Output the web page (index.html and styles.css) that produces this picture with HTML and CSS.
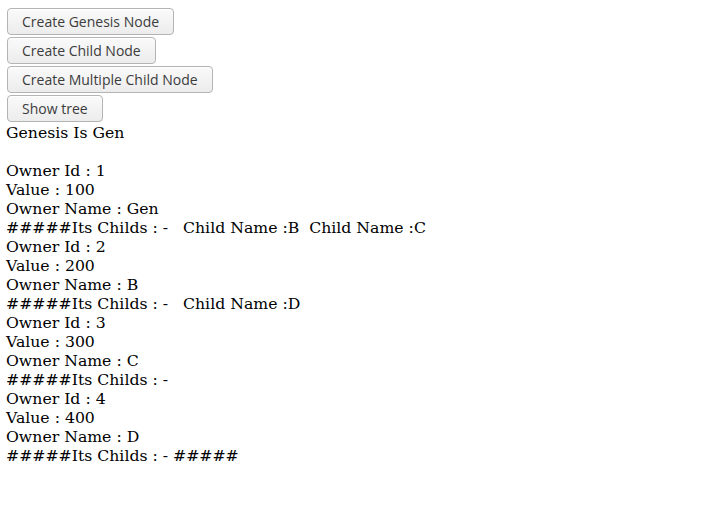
FILE: index.html
```html
<!DOCTYPE html>
<html>
<head>
<meta charset="utf-8">
<link rel="stylesheet" href="styles.css">
</head>
<body>
<div class="actions">
  <button class="btn">Create Genesis Node</button>
  <button class="btn">Create Child Node</button>
  <button class="btn">Create Multiple Child Node</button>
  <button class="btn">Show tree</button>
</div>
<div class="output">
  <div class="line">Genesis Is Gen</div>
  <div class="line">&nbsp;</div>
  <div class="line">Owner Id : 1</div>
  <div class="line">Value : 100</div>
  <div class="line">Owner Name : Gen</div>
  <div class="line">#####Its Childs : -   Child Name :B  Child Name :C</div>
  <div class="line">Owner Id : 2</div>
  <div class="line">Value : 200</div>
  <div class="line">Owner Name : B</div>
  <div class="line">#####Its Childs : -   Child Name :D</div>
  <div class="line">Owner Id : 3</div>
  <div class="line">Value : 300</div>
  <div class="line">Owner Name : C</div>
  <div class="line">#####Its Childs : -</div>
  <div class="line">Owner Id : 4</div>
  <div class="line">Value : 400</div>
  <div class="line">Owner Name : D</div>
  <div class="line">#####Its Childs : - #####</div>
</div>
</body>
</html>
```
FILE: styles.css
```css
html, body {
  background: #ffffff;
}
body {
  margin: 0;
  padding: 8px 6px;
  font-family: "DejaVu Serif", serif;
  font-size: 15.7px;
  line-height: 19px;
  color: #000000;
}
.actions {
  display: flex;
  flex-direction: column;
  align-items: flex-start;
  gap: 2px;
  padding-left: 1px;
}
.btn {
  font-family: "Open Sans", "DejaVu Sans", sans-serif;
  font-size: 14px;
  color: #3c3c3c;
  height: 27px;
  padding: 0 14px;
  border: 1px solid #b4b4b4;
  border-radius: 4px;
  background: linear-gradient(#fafafa, #ececec);
  box-shadow: inset 0 1px 0 #ffffff;
  margin: 0;
}
.output {
  margin-top: 1px;
}
.line {
  white-space: pre;
}
```
